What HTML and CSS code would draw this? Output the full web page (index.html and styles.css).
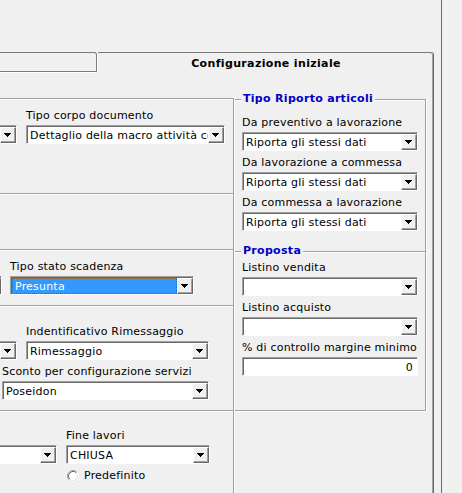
FILE: index.html
```html
<!DOCTYPE html>
<html lang="it">
<head>
<meta charset="utf-8">
<title>Configurazione iniziale</title>
<link rel="stylesheet" href="styles.css">
</head>
<body>
<div class="form">
  <div class="tabctl">
    <div class="tabstrip">
      <div class="tab tab-off"></div>
      <div class="tab tab-on">Configurazione iniziale</div>
    </div>
    <div class="panel">
      <div class="col-left">
        <div class="frame f1">
          <div class="row">
            <div class="combo clip clip-a"><div class="combo-in"><span class="ctext"></span><span class="drop"><svg width="7" height="4" viewBox="0 0 7 4"><path d="M0 0h7v1H0zM1 1h5v1H1zM2 2h3v1H2zM3 3h1v1H3z"/></svg></span></div></div>
            <div class="field w-corpo gap-9">
              <div class="lbl">Tipo corpo documento</div>
              <div class="combo"><div class="combo-in"><span class="ctext">Dettaglio della macro attività commessa</span><span class="drop"><svg width="7" height="4" viewBox="0 0 7 4"><path d="M0 0h7v1H0zM1 1h5v1H1zM2 2h3v1H2zM3 3h1v1H3z"/></svg></span></div></div>
            </div>
          </div>
        </div>
        <div class="frame f2"></div>
        <div class="frame f3">
          <div class="row">
            <div class="combo clip clip-b"><div class="combo-in"><span class="ctext"></span><span class="drop"><svg width="7" height="4" viewBox="0 0 7 4"><path d="M0 0h7v1H0zM1 1h5v1H1zM2 2h3v1H2zM3 3h1v1H3z"/></svg></span></div></div>
            <div class="field w-scad gap-8">
              <div class="lbl">Tipo stato scadenza</div>
              <div class="combo"><div class="combo-in"><span class="ctext sel">Presunta</span><span class="drop"><svg width="7" height="4" viewBox="0 0 7 4"><path d="M0 0h7v1H0zM1 1h5v1H1zM2 2h3v1H2zM3 3h1v1H3z"/></svg></span></div></div>
            </div>
          </div>
        </div>
        <div class="frame f4">
          <div class="row">
            <div class="combo clip clip-a"><div class="combo-in"><span class="ctext"></span><span class="drop"><svg width="7" height="4" viewBox="0 0 7 4"><path d="M0 0h7v1H0zM1 1h5v1H1zM2 2h3v1H2zM3 3h1v1H3z"/></svg></span></div></div>
            <div class="field w-rimess gap-9">
              <div class="lbl">Indentificativo Rimessaggio</div>
              <div class="combo"><div class="combo-in"><span class="ctext">Rimessaggio</span><span class="drop"><svg width="7" height="4" viewBox="0 0 7 4"><path d="M0 0h7v1H0zM1 1h5v1H1zM2 2h3v1H2zM3 3h1v1H3z"/></svg></span></div></div>
            </div>
          </div>
          <div class="field w-sconto row2">
            <div class="lbl">Sconto per configurazione servizi</div>
            <div class="combo"><div class="combo-in"><span class="ctext">Poseidon</span><span class="drop"><svg width="7" height="4" viewBox="0 0 7 4"><path d="M0 0h7v1H0zM1 1h5v1H1zM2 2h3v1H2zM3 3h1v1H3z"/></svg></span></div></div>
          </div>
        </div>
        <div class="frame f5">
          <div class="row">
            <div class="combo clip clip-c"><div class="combo-in"><span class="ctext"></span><span class="drop"><svg width="7" height="4" viewBox="0 0 7 4"><path d="M0 0h7v1H0zM1 1h5v1H1zM2 2h3v1H2zM3 3h1v1H3z"/></svg></span></div></div>
            <div class="field w-fine gap-9">
              <div class="lbl">Fine lavori</div>
              <div class="combo"><div class="combo-in"><span class="ctext">CHIUSA</span><span class="drop"><svg width="7" height="4" viewBox="0 0 7 4"><path d="M0 0h7v1H0zM1 1h5v1H1zM2 2h3v1H2zM3 3h1v1H3z"/></svg></span></div></div>
              <div class="radio">
                <svg width="12" height="12" viewBox="0 0 12 12">
                  <circle cx="6" cy="6" r="4.5" fill="#fff"/>
                  <path d="M2.11 9.89A5.5 5.5 0 0 1 9.89 2.11" fill="none" stroke="#a0a0a0"/>
                  <path d="M9.89 2.11A5.5 5.5 0 0 1 2.11 9.89" fill="none" stroke="#ffffff"/>
                  <path d="M2.82 9.18A4.5 4.5 0 0 1 9.18 2.82" fill="none" stroke="#696969"/>
                  <path d="M9.18 2.82A4.5 4.5 0 0 1 2.82 9.18" fill="none" stroke="#e3e3e3"/>
                </svg>
                <span>Predefinito</span>
              </div>
            </div>
          </div>
        </div>
      </div>
      <div class="col-right">
        <div class="group g1">
          <div class="legend">Tipo Riporto articoli</div>
          <div class="items">
            <div class="item">
              <div class="lbl">Da preventivo a lavorazione</div>
              <div class="combo"><div class="combo-in"><span class="ctext">Riporta gli stessi dati</span><span class="drop"><svg width="7" height="4" viewBox="0 0 7 4"><path d="M0 0h7v1H0zM1 1h5v1H1zM2 2h3v1H2zM3 3h1v1H3z"/></svg></span></div></div>
            </div>
            <div class="item">
              <div class="lbl">Da lavorazione a commessa</div>
              <div class="combo"><div class="combo-in"><span class="ctext">Riporta gli stessi dati</span><span class="drop"><svg width="7" height="4" viewBox="0 0 7 4"><path d="M0 0h7v1H0zM1 1h5v1H1zM2 2h3v1H2zM3 3h1v1H3z"/></svg></span></div></div>
            </div>
            <div class="item">
              <div class="lbl">Da commessa a lavorazione</div>
              <div class="combo"><div class="combo-in"><span class="ctext">Riporta gli stessi dati</span><span class="drop"><svg width="7" height="4" viewBox="0 0 7 4"><path d="M0 0h7v1H0zM1 1h5v1H1zM2 2h3v1H2zM3 3h1v1H3z"/></svg></span></div></div>
            </div>
          </div>
        </div>
        <div class="group g2">
          <div class="legend">Proposta</div>
          <div class="items">
            <div class="item">
              <div class="lbl">Listino vendita</div>
              <div class="combo"><div class="combo-in"><span class="ctext"></span><span class="drop"><svg width="7" height="4" viewBox="0 0 7 4"><path d="M0 0h7v1H0zM1 1h5v1H1zM2 2h3v1H2zM3 3h1v1H3z"/></svg></span></div></div>
            </div>
            <div class="item">
              <div class="lbl">Listino acquisto</div>
              <div class="combo"><div class="combo-in"><span class="ctext"></span><span class="drop"><svg width="7" height="4" viewBox="0 0 7 4"><path d="M0 0h7v1H0zM1 1h5v1H1zM2 2h3v1H2zM3 3h1v1H3z"/></svg></span></div></div>
            </div>
            <div class="item">
              <div class="lbl">% di controllo margine minimo</div>
              <div class="combo"><div class="combo-in"><span class="ctext num">0</span></div></div>
            </div>
          </div>
        </div>
      </div>
    </div>
  </div>
</div>
</body>
</html>
```

FILE: styles.css
```css
* { box-sizing: border-box; }
html, body { margin: 0; padding: 0; }
body {
  width: 462px;
  height: 493px;
  overflow: hidden;
  background: #f0f0f0;
  font-family: "DejaVu Sans", Verdana, sans-serif;
  font-size: 11px;
  letter-spacing: 0.2px;
  color: #000;
}
.form {
  width: 442px;
  height: 493px;
  border-right: 1px solid #6a6a6a;
}
.tabctl {
  padding-top: 52px;
  width: 433px;
  height: 100%;
  display: flex;
  flex-direction: column;
}
.tabstrip { display: flex; height: 20px; flex: none; }
.tab-off {
  width: 97px;
  border-top: 1px solid #7a7a7a;
  border-right: 1px solid #7a7a7a;
  border-bottom: 1px solid #7a7a7a;
  border-top-right-radius: 3px;
  box-shadow: 0 1px 0 #fff;
}
.tab-on {
  flex: 1;
  border-top: 1px solid #7a7a7a;
  border-left: 1px solid #fff;
  border-right: 1px solid #a0a0a0;
  border-top-left-radius: 3px;
  border-top-right-radius: 3px;
  box-shadow: 1px 0 0 #696969;
  font-weight: bold;
  letter-spacing: 0.35px;
  text-align: center;
  line-height: 13px;
  padding-top: 4px;
  padding-left: 2px;
}
.panel {
  flex: 1;
  display: flex;
  align-items: flex-start;
  padding-top: 26px;
  border-right: 1px solid #a0a0a0;
  box-shadow: 1px 0 0 #696969;
}
.col-left {
  width: 234px;
  align-self: stretch;
  display: flex;
  flex-direction: column;
}
.frame {
  border-top: 1px solid #a0a0a0;
  border-right: 1px solid #a0a0a0;
  box-shadow: inset 0 1px 0 #fff, 1px 0 0 #fff;
  flex: none;
}
.f1 { height: 95px; padding-top: 9px; }
.f2 { height: 56px; }
.f3 { height: 56px; padding-top: 9px; }
.f4 { height: 105px; padding-top: 18px; }
.f5 { flex: 1; padding-top: 17px; }

.row { display: flex; align-items: flex-start; }
.row > .clip { margin-top: 17px; }
.clip-a { width: 60px; margin-left: -43px; }
.clip-b { width: 40px; margin-left: -38px; }
.clip-c { width: 100px; margin-left: -43px; }
.gap-8 { margin-left: 8px; }
.gap-9 { margin-left: 9px; }
.w-corpo { width: 199px; }
.w-scad { width: 184px; }
.w-rimess { width: 183px; }
.w-sconto { width: 207px; margin-left: 2px; }
.w-fine { width: 144px; }
.row2 { margin-top: 4px; }

.col-right {
  width: 191px;
  margin-left: 1px;
  margin-top: 1px;
  display: flex;
  flex-direction: column;
}
.group {
  border-top: 1px solid #a0a0a0;
  border-right: 1px solid #a0a0a0;
  box-shadow: inset 0 1px 0 #fff, 1px 0 0 #fff;
  padding: 0 7px;
}
.g1 { height: 152px; }
.g2 {
  height: 160px;
  border-bottom: 1px solid #a0a0a0;
  box-shadow: inset 0 1px 0 #fff, 1px 1px 0 #fff;
}
.legend {
  display: table;
  margin: -8px 0 0 -1px;
  padding: 0 2px;
  background: #f0f0f0;
  color: #0000c8;
  font-weight: bold;
  letter-spacing: 0.3px;
  line-height: 13px;
}
.g1 .items { margin-top: 10px; }
.g2 .items { margin-top: 3px; }
.item + .item { margin-top: 4px; }

.lbl {
  height: 15px;
  line-height: 14px;
  padding-top: 1px;
  margin-bottom: 2px;
  white-space: nowrap;
}
.combo {
  height: 19px;
  border: 1px solid;
  border-color: #a0a0a0 #fff #fff #a0a0a0;
  background: #fff;
}
.combo-in {
  height: 17px;
  display: flex;
  border-top: 1px solid #696969;
  border-left: 1px solid #696969;
}
.ctext {
  flex: 1;
  min-width: 0;
  overflow: hidden;
  white-space: nowrap;
  padding-left: 2px;
  padding-top: 1px;
  line-height: 15px;
}
.ctext.sel {
  background: #3399ff;
  color: #fff;
  border: 1px dotted #7a5a30;
  padding-left: 2px;
  padding-top: 1px;
  line-height: 13px;
}
.ctext.num { text-align: right; padding-right: 4px; }
.drop {
  flex: none;
  width: 16px;
  height: 16px;
  background: #f0f0f0;
  border: 1px solid;
  border-color: #fff #696969 #696969 #fff;
  box-shadow: inset -1px -1px 0 #a0a0a0;
  display: flex;
  align-items: center;
  padding-left: 3px;
}
.drop svg { display: block; fill: #000; }
.radio {
  display: flex;
  align-items: center;
  margin-top: 5px;
  margin-left: 1px;
  line-height: 14px;
  gap: 5px;
}
.radio svg { display: block; flex: none; }
```
